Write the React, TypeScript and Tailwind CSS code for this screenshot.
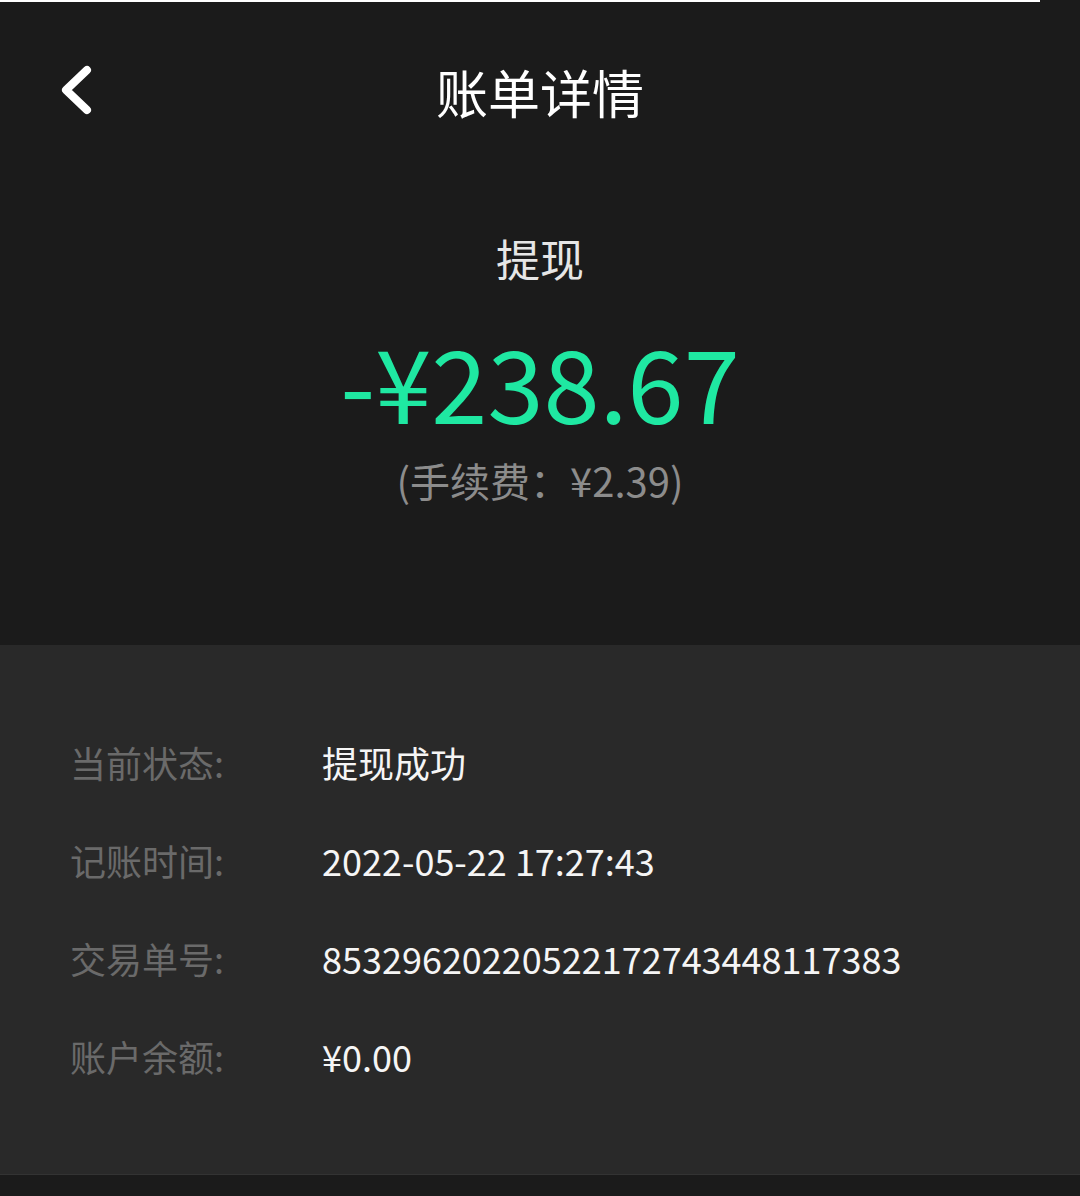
import React from 'react';

const rows = [
  { label: '当前状态:', value: '提现成功' },
  { label: '记账时间:', value: '2022-05-22 17:27:43' },
  { label: '交易单号:', value: '85329620220522172743448117383' },
  { label: '账户余额:', value: '¥0.00' },
];

export default function App() {
  return (
    <div className="min-h-[1196px] w-[1080px] bg-[#1b1b1b] font-['Noto_Sans_CJK_SC','Noto_Sans',sans-serif]">
      <div className="h-[2px] w-[1040px] bg-white" />
      <section className="h-[643px] bg-[#1b1b1b]">
        <header className="grid h-[188px] grid-cols-[1fr_auto_1fr] items-center">
          <button className="flex h-[60px] items-center justify-self-start pl-[58px] pb-[12px] text-white">
            <svg width="40" height="50" viewBox="0 0 40 50" fill="none">
              <path
                d="M29 5L8 25L29 45"
                stroke="currentColor"
                strokeWidth="8"
                strokeLinecap="round"
                strokeLinejoin="round"
              />
            </svg>
          </button>
          <h1 className="mb-[8px] text-[52px] leading-[60px] text-white">账单详情</h1>
          <div />
        </header>

        <div className="flex flex-col items-center">
          <div className="mt-[38px] text-[44px] leading-[60px] text-[#e6e6e6]">提现</div>
          <div className="mt-[37px] text-[101px] leading-[110px] text-[#1fe8a2]">-¥238.67</div>
          <div className="mt-[20px] text-[40px] leading-[50px] text-[#8c8c8c]">(手续费：¥2.39)</div>
        </div>
      </section>

      <section className="border-b border-[#333333] bg-[#292929] pb-[69px] pt-[68px]">
        {rows.map((r) => (
          <div key={r.label} className="flex h-[98px] items-center px-[70px] text-[36px]">
            <span className="w-[252px] text-[#6a6a6a]">{r.label}</span>
            <span className="text-[#f5f5f5]">{r.value}</span>
          </div>
        ))}
      </section>
    </div>
  );
}
